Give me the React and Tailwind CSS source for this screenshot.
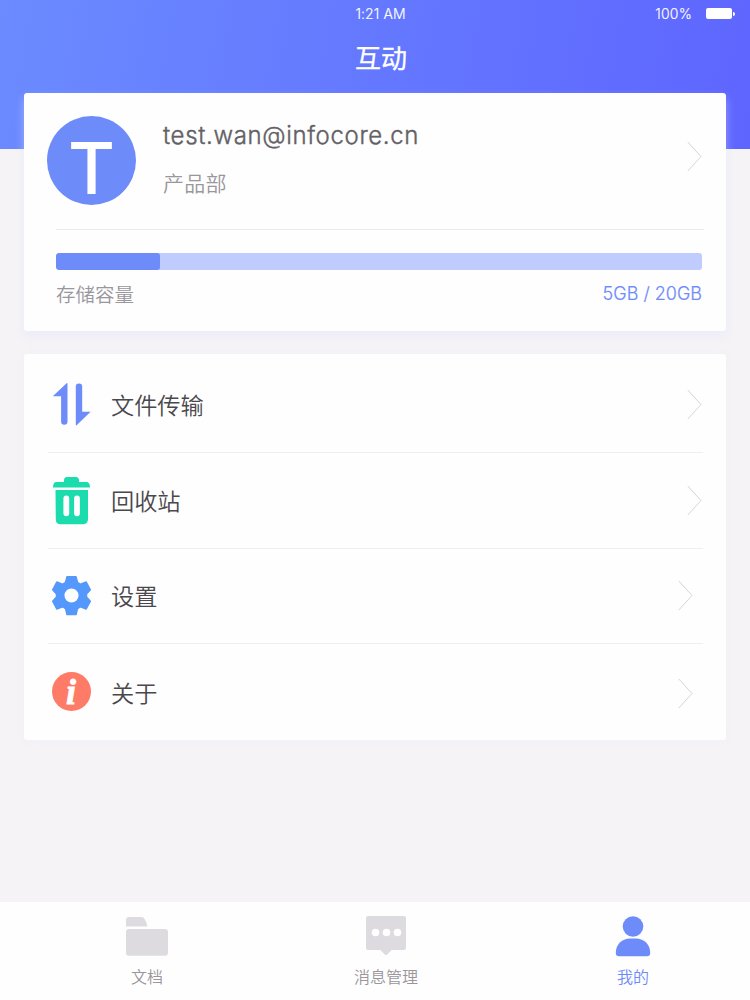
import React from 'react';
import clsx from 'clsx';

const TransferIcon = () => (
    <svg width="40" height="45" viewBox="0 0 40 45" fill="#6e8bfa" className="-ml-0.5">
        <path d="M1.8 14.2 15.6 1.2Q16.5 .7 16.5 2V39.6a3.2 3.2 0 0 1-6.4 0V14.2Z" />
        <path d="M24.8 4.6a3.2 3.2 0 0 1 6.4 0V29.8H39.6L25.6 43.2Q24.8 43.8 24.8 42.6Z" />
    </svg>
);

const TrashIcon = () => (
    <svg width="40" height="50" viewBox="0 0 40 50" fill="#1bdcac" className="-ml-0.5">
        <path d="M13 6V4.500Q13 1 16 1H25Q28 1 28 4.500V6H36Q39 6.500 39 11.500H2Q2 6.500 5 6Z" />
        <path fillRule="evenodd" d="M4.500 14H37V43.500Q36.500 48.300 32 48.300H9.500Q5 48.300 4.800 43.500ZM15.300 19.500a2.900 2.900 0 0 0-2.900 2.900V37.300a2.900 2.900 0 0 0 5.800 0V22.400a2.900 2.900 0 0 0-2.900-2.900ZM26 19.500a2.900 2.900 0 0 0-2.900 2.900V37.300a2.900 2.900 0 0 0 5.800 0V22.400A2.900 2.900 0 0 0 26 19.500Z" />
    </svg>
);

const GearIcon = () => (
    <svg width="47" height="47" viewBox="0 0 47 47" fill="#5498fb" className="shrink-0">
        <path
            fillRule="evenodd"
            stroke="#5498fb"
            strokeWidth="1.5"
            strokeLinejoin="round"
            d="M19 4.800H28L29.500 10.500 32.500 12.300 38.200 10 42.300 17.800 38.500 22V25L42.300 29.200 38.200 37 32.500 34.700 29.500 36.500 28 42.500H19L17.500 36.500 14.500 34.700 8.800 37 4.700 29.200 8.500 25V22L4.700 17.800 8.800 10 14.500 12.300 17.500 10.500ZM23.500 15.700a7.800 7.800 0 1 0 0 15.600 7.800 7.800 0 1 0 0-15.600Z"
        />
    </svg>
);

const InfoIcon = () => (
    <span className="w-[39px] h-[39px] mb-px rounded-full bg-[#fe7c67] flex items-center justify-center text-white font-['Liberation_Serif',serif] font-bold italic text-[36px] leading-[36px] pr-px [-webkit-text-stroke:0.8px_white]">
        i
    </span>
);

const FolderIcon = () => (
    <svg width="44" height="41" viewBox="0 0 44 41" fill="#dddbe0">
        <path d="M1 10.500V4Q1 1 4 1H16Q18.500 1 19.800 3.300Q22 7 22.300 10.500Z" />
        <rect x="1" y="13" width="42" height="26.700" rx="3" />
    </svg>
);

const MessageIcon = () => (
    <svg width="42" height="41" viewBox="0 0 42 41" fill="#dddbe0">
        <path d="M3 0H39Q41 0 41 2V32Q41 34 39 34H26.500L22 38.700Q21 39.500 20 38.700L15.500 34H3Q1 34 1 32V2Q1 0 3 0Z" />
        <circle cx="10.500" cy="16.500" r="3.800" fill="#fff" />
        <circle cx="21.500" cy="16.500" r="3.800" fill="#fff" />
        <circle cx="32.500" cy="16.500" r="3.800" fill="#fff" />
    </svg>
);

const UserIcon = () => (
    <svg width="36" height="41" viewBox="0 0 36 41" fill="#6e8bfa">
        <circle cx="18" cy="10.500" r="10.300" />
        <path d="M15.500 22.500H20.500C30 22.500 35.200 29 35.200 37Q35.200 40.200 32 40.200H4Q.8 40.200 .8 37C.8 29 6 22.500 15.500 22.500Z" />
    </svg>
);

const Chevron = ({ className }) => (
    <svg width="15" height="31" viewBox="0 0 15 31" fill="none" stroke="#d6d3dc" className={clsx("shrink-0", className)}>
        <path d="M.8 1 14 15.500.8 30" />
    </svg>
);

const menu = [
    { title: "文件传输", icon: TransferIcon, row: "h-[99px] pt-0.5 border-b", arrow: "mr-px" },
    { title: "回收站", icon: TrashIcon, row: "h-[96px] border-b", arrow: "mr-px" },
    { title: "设置", icon: GearIcon, row: "h-[95px] pb-px border-b", arrow: "mr-[10px]" },
    { title: "关于", icon: InfoIcon, row: "h-[96px]", arrow: "mr-[10px] mt-0.5" },
];

const tabs = [
    { title: "文档", icon: FolderIcon, pos: "ml-[102px] w-[90px]" },
    { title: "消息管理", icon: MessageIcon, pos: "ml-[149px] w-[90px]" },
    { title: "我的", icon: UserIcon, pos: "ml-[157px] w-[90px]", active: true },
];

const App = () => {
    const used = 16.1;

    return (
        <div className="w-[750px] h-[1000px] bg-[#f5f3f6] flex flex-col overflow-hidden font-['Noto_Sans_CJK_SC',sans-serif]">
            <header className="h-[149px] shrink-0 bg-linear-[100deg] from-[#6b8bff] to-[#5e65ff] text-white">
                {/* Status bar */}
                <div className="h-[27px] grid grid-cols-3 items-center font-[Inter,sans-serif] font-light text-sm [-webkit-text-stroke:0.15px_white]">
                    <span />
                    <span className="text-center pl-[11px] tracking-[0.1px]">1:21 AM</span>
                    <div className="flex items-center justify-end pr-[15px]">
                        <span className="mr-3.5 tracking-[0.2px]">100%</span>
                        <span className="w-[26px] h-[11px] bg-white rounded-[2px]" />
                        <span className="w-0.5 h-1 bg-white rounded-r ml-px" />
                    </div>
                </div>
                <h1 className="pt-2 pl-3 text-center text-[26px] leading-[44px] font-normal [-webkit-text-stroke:0.3px_white]">互动</h1>
            </header>

            <main className="-mt-14 px-6 flex-1">
                {/* Profile */}
                <section className="h-[238px] bg-[#fefefe] rounded-[3px] shadow-[0_5px_10px_rgba(225,228,255,0.45)]">
                    <div className="h-[136px] flex items-start pl-[23px] pr-[25px] pt-[23px]">
                        <div className="w-[89px] h-[89px] rounded-full bg-[#6e8bfa] flex items-center justify-center text-white font-[Inter,sans-serif] font-medium text-[72px] leading-none pt-[15px]">
                            T
                        </div>
                        <div className="ml-[27px] flex-1">
                            <p className="font-[Inter,sans-serif] font-light text-[24px] leading-[39px] tracking-[0.65px] text-[#636065] [-webkit-text-stroke:0.4px_#636065]">test.wan@infocore.cn</p>
                            <p className="mt-[11px] text-[21px] leading-8 font-[350] tracking-[0.3px] text-[#99969c]">产品部</p>
                        </div>
                        <Chevron className="mt-[25px] -mr-px" />
                    </div>
                    <div className="ml-8 mr-[22px] border-t border-[#ebe9ed] pt-[23px] pr-0.5">
                        <div className="h-[17px] rounded-[3px] bg-[#c0ccfe] overflow-hidden">
                            <div className="h-full rounded-[3px] bg-[#6e8bfa]" style={{ width: `${used}%` }} />
                        </div>
                        <div className="mt-[9px] flex justify-between items-center leading-[30px]">
                            <span className="text-[19.5px] font-[350] text-[#99969c]">存储容量</span>
                            <span className="font-[Inter,sans-serif] font-light text-[18px] text-[#6e8bfa] [-webkit-text-stroke:0.2px_#6e8bfa]">5GB / 20GB</span>
                        </div>
                    </div>
                </section>

                {/* Menu */}
                <section className="mt-[23px] h-[386px] bg-[#fefefe] rounded-[3px] pl-6 pr-[23px] shadow-[0_0_10px_rgba(238,240,248,0.6)]">
                    {menu.map((item) => (
                        <div key={item.title} className={clsx("flex items-center border-[#f0eef2]", item.row)}>
                            <div className="w-[47px] flex justify-center shrink-0">
                                <item.icon />
                            </div>
                            <span className="ml-4 flex-1 text-[23.2px] font-[350] text-[#4a484d]">{item.title}</span>
                            <Chevron className={item.arrow} />
                        </div>
                    ))}
                </section>
            </main>

            {/* Tab bar */}
            <nav className="h-[98px] shrink-0 bg-[#fefefe] flex">
                {tabs.map((tab) => (
                    <div key={tab.title} className={clsx("flex flex-col items-center pt-3.5", tab.pos)}>
                        <tab.icon />
                        <span className={clsx("mt-[7px] text-base leading-6 font-[350]", tab.active ? "text-[#6e8bfa]" : "text-[#99969c]")}>
                            {tab.title}
                        </span>
                    </div>
                ))}
            </nav>
        </div>
    );
};

export default App;
